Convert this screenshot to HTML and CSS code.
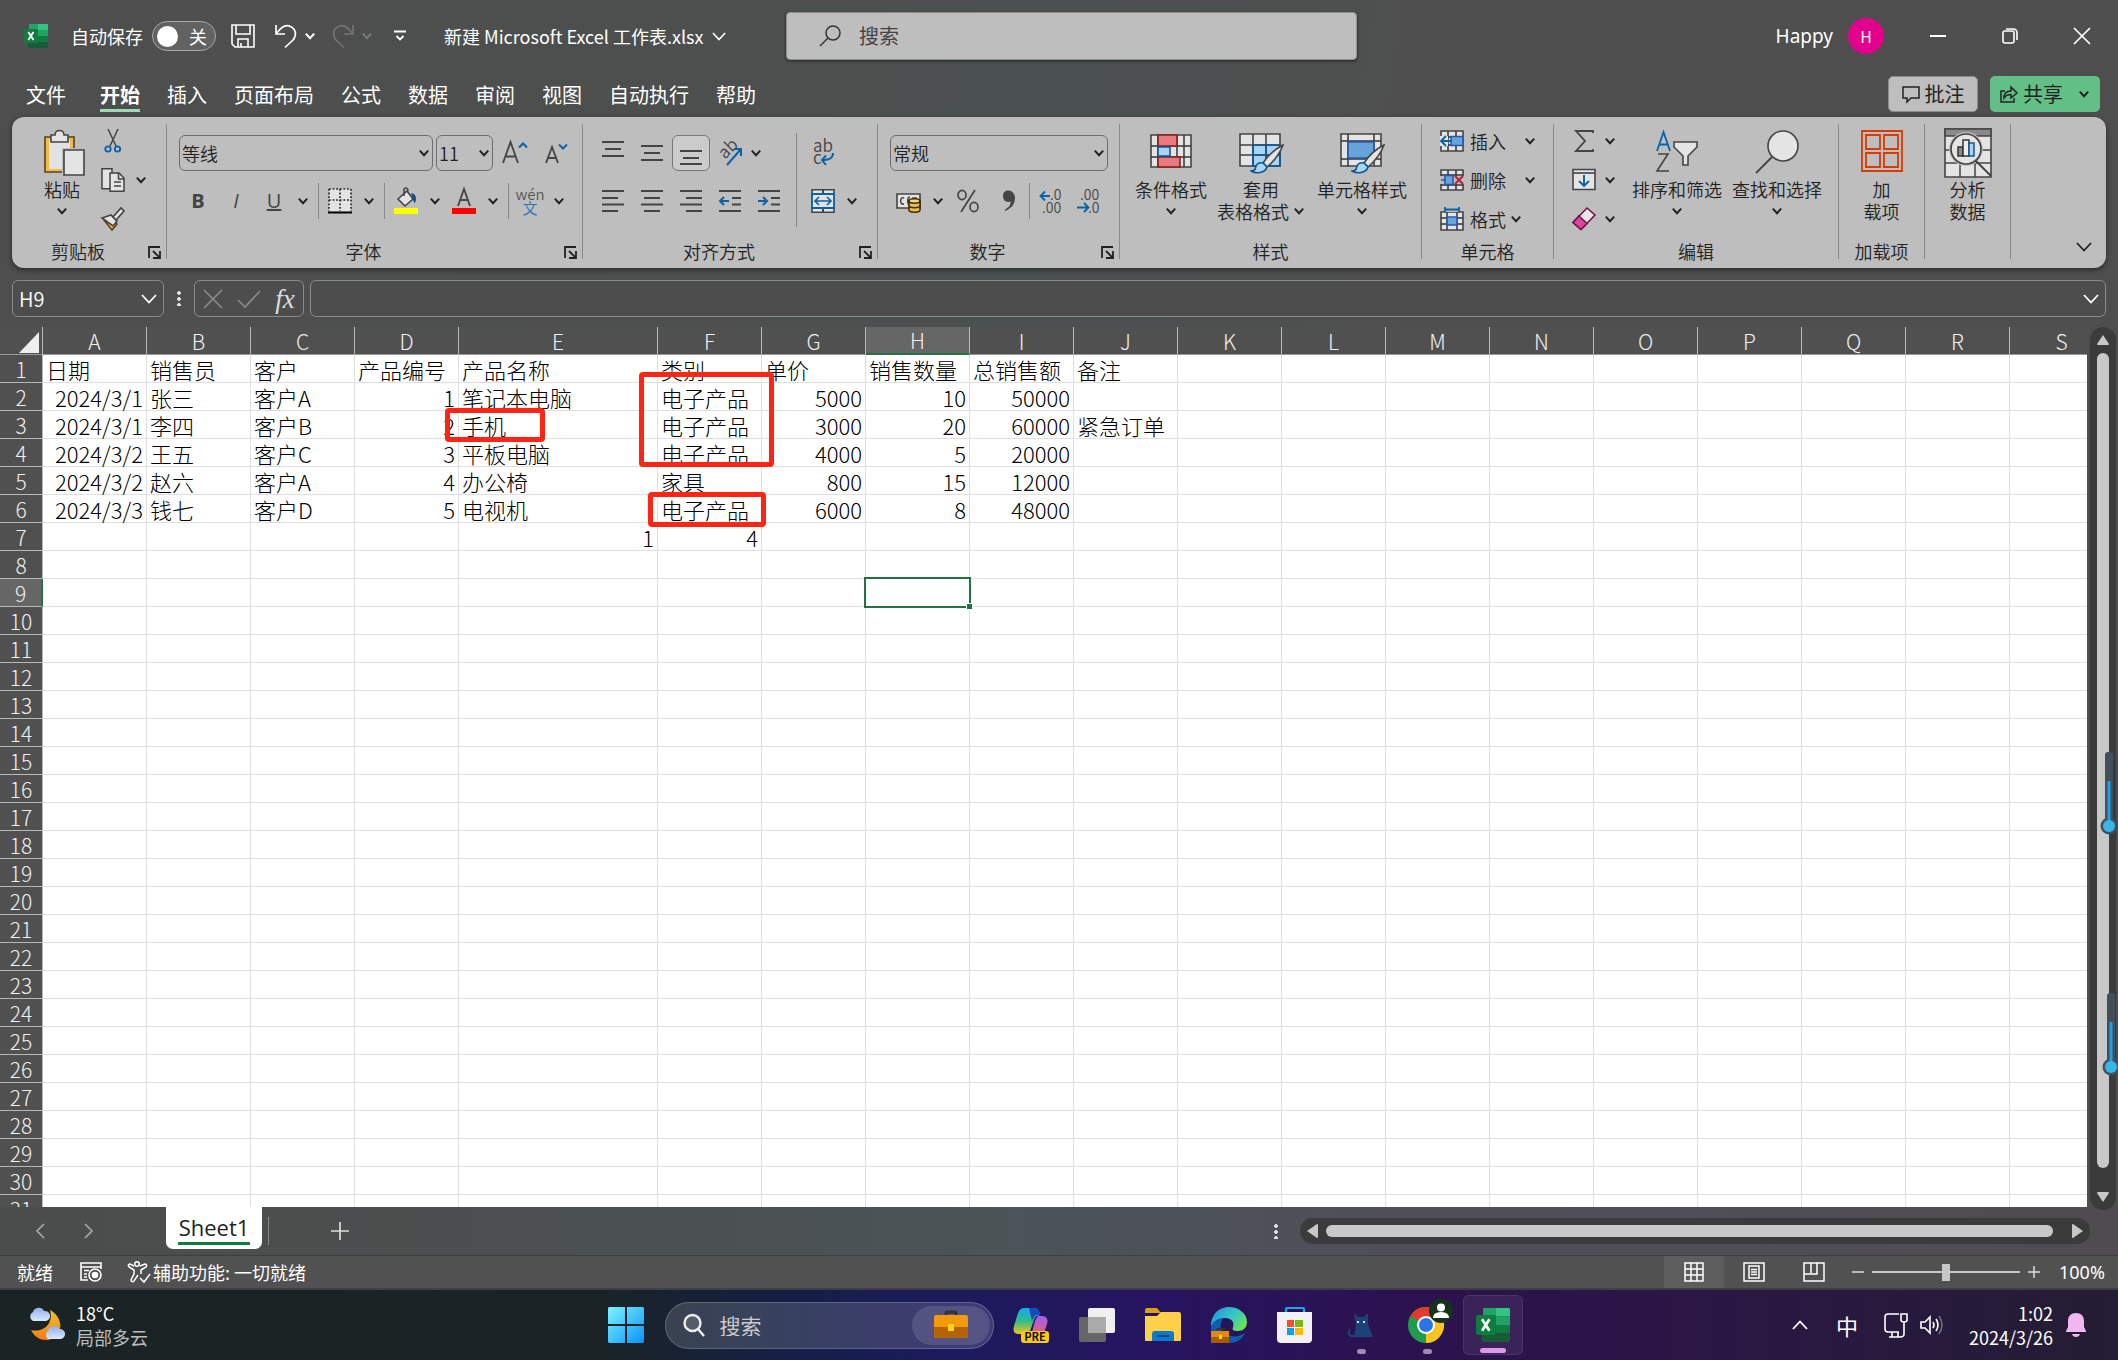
FILE: index.html
```html
<!DOCTYPE html>
<html lang="zh-CN">
<head>
<meta charset="utf-8">
<title>新建 Microsoft Excel 工作表.xlsx</title>
<link rel="stylesheet" href="styles.css">
</head>
<body>
<svg class="sprite" aria-hidden="true">
  <symbol id="chev" viewBox="0 0 10 10"><path d="M1.500 3 5 6.800 8.500 3" fill="none" stroke="currentColor" stroke-width="1.700"/></symbol>
  <symbol id="chev-lg" viewBox="0 0 16 10"><path d="M1 1l7 7.500 7-7.500" fill="none" stroke="currentColor" stroke-width="1.800"/></symbol>
  <symbol id="launch" viewBox="0 0 13 13"><path d="M1 12V1h11M5 5l6 6M12 5v7H5" fill="none" stroke="#222" stroke-width="1.800"/></symbol>
  <symbol id="excel" viewBox="0 0 24 24">
    <path d="M5 0h9v6H5z" fill="#21a366"/><path d="M14 0h9a1 1 0 0 1 1 1v5H14z" fill="#33c481"/>
    <path d="M4 6h10v6H4z" fill="#107c41"/><path d="M14 6h10v6H14z" fill="#21a366"/>
    <path d="M4 12h10v6H4z" fill="#185c37"/><path d="M14 12h10v6H14z" fill="#107c41"/>
    <path d="M4 18h20v5a1 1 0 0 1-1 1H5a1 1 0 0 1-1-1z" fill="#185c37"/>
    <rect y="5" width="14" height="14" rx="1.500" fill="#107c41"/>
    <path d="M4.300 8l5.200 8M9.500 8l-5.200 8" stroke="#fff" stroke-width="1.900"/>
  </symbol>
  <symbol id="brush" viewBox="0 0 34 30">
    <path d="M33 1C25 5 17 13 13 19l4 4C23 18 30 9 33 1z" fill="#e4e4e4" stroke="#444" stroke-width="1.600"/>
    <path d="M13 19c-4-1-7 1-7.500 5-.4 2-2.500 3-4.500 3 5 3 14 2.500 16-4z" fill="#a8d4f5" stroke="#10568f" stroke-width="1.600"/>
  </symbol>
</svg>

<header class="titlebar">
  <div class="title-left">
    <svg class="i24" viewBox="0 0 24 24"><use href="#excel"/></svg>
    <label class="autosave">自动保存
      <span class="switch"><input type="checkbox" role="switch"><span class="switch-text">关</span></span>
    </label>
    <button class="save" aria-label="保存"><svg class="i24" viewBox="0 0 24 24" fill="none" stroke="#fff" stroke-width="1.600"><path d="M1 1h22v22H4l-3-3zM5 1v9h14V1M7 23v-8h10v8M10 19v4"/></svg></button>
    <button class="undo" aria-label="撤消"><svg width="22" height="24" viewBox="0 0 22 24" fill="none" stroke="#fff" stroke-width="1.700"><path d="M1 1v9h9M1.500 9.500C6 3 11 0 15.500 2.500 21 5 22 11 18 16l-8 7.500"/></svg></button>
    <button class="qcaret" aria-label="撤消列表"><svg class="chev"><use href="#chev"/></svg></button>
    <button class="redo" aria-label="恢复"><svg width="22" height="24" viewBox="0 0 22 24" fill="none" stroke="#727372" stroke-width="1.700"><path d="M21 1v9h-9M20.500 9.500C16 3 11 0 6.500 2.500 1 5 0 11 4 16l8 7.500"/></svg></button>
    <button class="qcaret dim" aria-label="恢复列表"><svg class="chev"><use href="#chev"/></svg></button>
    <button class="qat" aria-label="自定义快速访问工具栏"><svg width="14" height="12" viewBox="0 0 14 12" fill="none" stroke="#fff" stroke-width="1.800"><path d="M1 1.500h12M3.500 6 7 9.500 10.500 6"/></svg></button>
    <button class="doc-name">新建 Microsoft Excel 工作表.xlsx <svg width="14" height="9"><use href="#chev-lg"/></svg></button>
  </div>
  <label class="search">
    <svg width="22" height="22" viewBox="0 0 22 22" fill="none" stroke="#333" stroke-width="1.500"><circle cx="14" cy="8" r="7"/><path d="M9 13l-8 8"/></svg>
    <input type="text" placeholder="搜索" aria-label="搜索">
  </label>
  <div class="title-right">
    <span class="user">Happy</span><span class="avatar">H</span>
    <div class="winbtns">
      <button aria-label="最小化"><svg width="16" height="16"><path d="M0 8h16" stroke="#fff" stroke-width="2"/></svg></button>
      <button aria-label="还原"><svg width="16" height="16" viewBox="0 0 16 16" fill="none" stroke="#fff" stroke-width="1.600"><rect x="1" y="3" width="11" height="12" rx="2"/><path d="M4 1h7q4 0 4 4v7"/></svg></button>
      <button aria-label="关闭"><svg width="16" height="16" stroke="#fff" stroke-width="1.700"><path d="M0 0l16 16M16 0L0 16"/></svg></button>
    </div>
  </div>
</header>

<nav class="tabs">
  <div class="tablist">
    <a href="#" class="file">文件</a><a href="#" class="active">开始</a><a href="#">插入</a><a href="#">页面布局</a><a href="#">公式</a><a href="#">数据</a><a href="#">审阅</a><a href="#">视图</a><a href="#">自动执行</a><a href="#">帮助</a>
  </div>
  <button class="comment"><svg width="18" height="18" viewBox="0 0 18 18" fill="none" stroke="#222" stroke-width="1.500"><path d="M1 2h16v11H9l-4 4v-4H1z"/></svg>批注</button>
  <button class="share"><svg width="18" height="18" viewBox="0 0 18 18" fill="none" stroke="#222" stroke-width="1.500"><path d="M5 6H1v11h13v-4M4 13c0-5 3-7 7-7V2l6 6-6 5V9.500c-3 0-5 .5-7 3.500z"/></svg>共享<svg class="chev"><use href="#chev"/></svg></button>
</nav>

<main class="ribbon">
  <section class="group g-clip">
    <div class="body">
      <button class="big paste"><span class="art"><svg width="42" height="46" viewBox="0 0 42 46">
        <path d="M1 7h29v35H1z" fill="#f0bc52" stroke="#5a4310" stroke-width="1.600"/><path d="M5 10h21v29H5z" fill="#e2e2e2"/>
        <path d="M7 12V5h4c0-6 9-6 9 0h4v7z" fill="#e4e4e4" stroke="#444" stroke-width="1.600"/><path d="M18 18h23v27H18z" fill="#bebebe"/><path d="M20 20h20v25H20z" fill="#e4e4e4" stroke="#444" stroke-width="1.600"/></svg></span>
        <span>粘贴</span><span class="line"><svg class="chev"><use href="#chev"/></svg></span></button>
      <div class="stack clip">
        <button aria-label="剪切"><svg class="i24" viewBox="0 0 24 24" fill="none"><path d="M7 0l8 17M17 0L9 17" stroke="#444" stroke-width="1.500"/><circle cx="7" cy="20" r="2.700" stroke="#0b62a8" stroke-width="1.800"/><circle cx="16.500" cy="20" r="2.700" stroke="#0b62a8" stroke-width="1.800"/></svg></button>
        <button aria-label="复制"><svg class="i24" viewBox="0 0 24 24" fill="#e4e4e4" stroke="#444" stroke-width="1.500"><path d="M1 0.800h10v20H1z"/><path d="M9 5h9l5 5v13.200H9z"/><path d="M17.500 5v6H23M13 14h7M13 18h7" fill="none"/></svg><svg class="chev"><use href="#chev"/></svg></button>
        <button aria-label="格式刷"><svg class="i24" viewBox="0 0 24 24" stroke-width="1.600"><path d="M3 13l8 10 5-6-8-8z" fill="#f0bc52" stroke="#5a4310"/><path d="M1 11l9-3 6 6-4 5z" fill="#e4e4e4" stroke="#444"/><path d="M12 10l8-9 3 3-8 9z" fill="#e4e4e4" stroke="#444"/></svg></button>
      </div>
    </div>
    <footer class="with-launch"><span>剪贴板</span><button aria-label="剪贴板设置"><svg class="lau"><use href="#launch"/></svg></button></footer>
  </section>

  <section class="group g-font">
    <div class="body rows">
      <div class="row combos">
        <label class="combo font-name"><select aria-label="字体"><option>等线</option></select><svg class="chev"><use href="#chev"/></svg></label>
        <label class="combo font-size"><select aria-label="字号"><option>11</option></select><svg class="chev"><use href="#chev"/></svg></label>
        <button class="ib" aria-label="增大字号"><svg width="26" height="24" viewBox="0 0 26 24" fill="none" stroke="#444" stroke-width="1.800"><path d="M1 22 8.500 1 16 22M4 15.500h9"/><path d="M17 6.500l4-4 4 4" stroke="#0b62a8" stroke-width="2"/></svg></button>
        <button class="ib" aria-label="减小字号"><svg width="24" height="24" viewBox="0 0 24 24" fill="none" stroke="#444" stroke-width="1.800"><path d="M2 22 8 6l6 16M4.500 17h7"/><path d="M15 3.500l4 4 4-4" stroke="#0b62a8" stroke-width="2"/></svg></button>
      </div>
      <div class="row">
        <button class="ib fmt"><b>B</b></button><button class="ib fmt"><i>I</i></button><button class="ib fmt"><u>U</u></button><button class="car" aria-label="下划线"><svg class="chev"><use href="#chev"/></svg></button>
        <span class="sep"></span>
        <button class="ib" aria-label="边框"><svg width="24" height="26" viewBox="0 0 24 26"><path d="M1 1h22v22H1z" fill="#e4e4e4"/><path d="M1 1h22M1 12h22M1 1v22M12 1v22M23 1v22" stroke="#222" stroke-width="1.600" stroke-dasharray="1.800 1.800"/><path d="M0 24.500h24" stroke="#000" stroke-width="2"/></svg></button><button class="car" aria-label="边框列表"><svg class="chev"><use href="#chev"/></svg></button>
        <span class="sep"></span>
        <button class="ib" aria-label="填充颜色"><svg width="24" height="28" viewBox="0 0 24 28"><path d="M4 12 13 4l6 8-8 7z" fill="#e4e4e4" stroke="#444" stroke-width="1.600"/><path d="M10 9V2c2-2 4-1 4 2" fill="none" stroke="#444" stroke-width="1.500"/><path d="M17 6c5 1 6 5 4 10-2-1-2-5-4-10z" fill="#0b4f86"/><path d="M0 21h24v6H0z" fill="#ff0"/></svg></button><button class="car" aria-label="填充列表"><svg class="chev"><use href="#chev"/></svg></button>
        <button class="ib" aria-label="字体颜色"><svg width="24" height="28" viewBox="0 0 24 28"><path d="M6 19 12 2l6 17M8.500 13h7" fill="none" stroke="#444" stroke-width="1.800"/><path d="M0 21h24v6H0z" fill="#f00"/></svg></button><button class="car" aria-label="颜色列表"><svg class="chev"><use href="#chev"/></svg></button>
        <span class="sep"></span>
        <button class="ib wen"><span>wén</span><span class="blue">文</span></button><button class="car" aria-label="拼音列表"><svg class="chev"><use href="#chev"/></svg></button>
      </div>
    </div>
    <footer class="with-launch"><span>字体</span><button aria-label="字体设置"><svg class="lau"><use href="#launch"/></svg></button></footer>
  </section>

  <section class="group g-align">
    <div class="body">
      <div class="rows">
        <div class="row gap1">
          <button class="ib" aria-label="顶端对齐"><svg class="i24 ln" viewBox="0 0 24 24"><path d="M1 1h22M4 8h16M1 15h22"/></svg></button>
          <button class="ib" aria-label="垂直居中"><svg class="i24 ln" viewBox="0 0 24 24"><path d="M1 5h22M4 12h16M1 19h22"/></svg></button>
          <button class="ib pressed" aria-label="底端对齐"><svg class="i24 ln" viewBox="0 0 24 24"><path d="M1 10h22M4 17h16M1 23h22"/></svg></button>
          <button class="ib" aria-label="方向"><svg width="26" height="26" viewBox="0 0 26 26"><text x="4" y="18" transform="rotate(-45 8 14)" font-size="17" fill="#444" class="svgtxt">ab</text><path d="M10 25 24 9M17 9h7v7" fill="none" stroke="#0b62a8" stroke-width="2"/></svg></button>
          <button class="car tight" aria-label="方向列表"><svg class="chev"><use href="#chev"/></svg></button>
        </div>
        <div class="row gap1">
          <button class="ib" aria-label="左对齐"><svg class="i24 ln" viewBox="0 0 24 24"><path d="M1 2h22M1 9h16M1 15.500h22M1 22h16"/></svg></button>
          <button class="ib" aria-label="居中"><svg class="i24 ln" viewBox="0 0 24 24"><path d="M1 2h22M4 9h16M1 15.500h22M4 22h16"/></svg></button>
          <button class="ib" aria-label="右对齐"><svg class="i24 ln" viewBox="0 0 24 24"><path d="M1 2h22M7 9h16M1 15.500h22M7 22h16"/></svg></button>
          <button class="ib" aria-label="减少缩进"><svg class="i24 ln" viewBox="0 0 24 24"><path d="M1 2h22M14 9h9M14 15.500h9M1 22h22"/><path d="M11 12H2M6 8l-4 4 4 4" stroke="#0b62a8"/></svg></button>
          <button class="ib" aria-label="增加缩进"><svg class="i24 ln" viewBox="0 0 24 24"><path d="M1 2h22M14 9h9M14 15.500h9M1 22h22"/><path d="M1 12h9M6 8l4 4-4 4" stroke="#0b62a8"/></svg></button>
        </div>
      </div>
      <span class="sep tall"></span>
      <div class="rows wrapcol">
        <div class="row"><button class="ib" aria-label="自动换行"><svg width="24" height="28" viewBox="0 0 24 28"><text x="2" y="13" font-size="17" fill="#444" class="svgtxt">ab</text><text x="2" y="25" font-size="17" fill="#444" class="svgtxt">c</text><path d="M22 14c0 5-3 7-11 7M15 16.500 11 21l4 5" fill="none" stroke="#0b62a8" stroke-width="2"/></svg></button></div>
        <div class="row"><button class="ib" aria-label="合并后居中"><svg class="i24" viewBox="0 0 24 24"><path d="M1 0.800h22v22.400H1z" fill="#e4e4e4" stroke="#444" stroke-width="1.600"/><path d="M12 1v22" stroke="#222" stroke-width="1.600"/><path d="M1 5h22v14H1z" fill="#e4e4e4" stroke="#0b62a8" stroke-width="1.800"/><path d="M4 12h16M8 8l-4 4 4 4M16 8l4 4-4 4" fill="none" stroke="#0b62a8" stroke-width="1.700"/></svg></button><button class="car" aria-label="合并列表"><svg class="chev"><use href="#chev"/></svg></button></div>
      </div>
    </div>
    <footer class="with-launch"><span>对齐方式</span><button aria-label="对齐设置"><svg class="lau"><use href="#launch"/></svg></button></footer>
  </section>

  <section class="group g-num">
    <div class="body rows">
      <div class="row"><label class="combo num-format"><select aria-label="数字格式"><option>常规</option></select><svg class="chev"><use href="#chev"/></svg></label></div>
      <div class="row">
        <button class="ib" aria-label="会计数字格式"><svg width="26" height="24" viewBox="0 0 26 24" fill="none" stroke="#444" stroke-width="1.600"><path d="M1 5h23v14H1z" fill="#e4e4e4"/><path d="M8 9c-4-2-5 7 0 6M14 8c-3 0-3 8 0 8M17 13V9h3v3"/><path d="M13 12v9c0 3 11 3 11 0v-9z" fill="#f0bc52" stroke="#3f2f08"/><ellipse cx="18.500" cy="12" rx="5.500" ry="2.200" fill="#f5d48c" stroke="#3f2f08"/><path d="M13 16.500c0 3 11 3 11 0" stroke="#3f2f08"/></svg></button><button class="car" aria-label="货币列表"><svg class="chev"><use href="#chev"/></svg></button>
        <button class="ib" aria-label="百分比样式"><svg class="i24" viewBox="0 0 24 24" fill="none" stroke="#444" stroke-width="1.700"><ellipse cx="7" cy="6" rx="4" ry="4.700"/><ellipse cx="19" cy="18" rx="4" ry="4.700"/><path d="M20 1 6 23"/></svg></button>
        <button class="ib" aria-label="千位分隔样式"><svg class="i24" viewBox="0 0 24 24"><path d="M10 7c0-8 12-7 12 2 0 7-5 11-10 13v-1.500c4-2 6-5 5.500-8C13 14 10 11 10 7z" fill="#444"/></svg></button>
        <span class="sep"></span>
        <button class="ib dec" aria-label="增加小数位数"><svg width="24" height="26" viewBox="0 0 24 26"><text x="11" y="12" font-size="14" fill="#444" class="svgtxt">.0</text><text x="3" y="25" font-size="14" fill="#444" class="svgtxt">.00</text><path d="M11 8H2M6 3.500 1.500 8 6 12.500" fill="none" stroke="#0b62a8" stroke-width="1.800"/></svg></button>
        <button class="ib dec" aria-label="减少小数位数"><svg width="24" height="26" viewBox="0 0 24 26"><text x="3" y="12" font-size="14" fill="#444" class="svgtxt">.00</text><text x="11" y="25" font-size="14" fill="#444" class="svgtxt">.0</text><path d="M0 19.500h11M7 15l4.500 4.500L7 24" fill="none" stroke="#0b62a8" stroke-width="1.800"/></svg></button>
      </div>
    </div>
    <footer class="with-launch"><span>数字</span><button aria-label="数字设置"><svg class="lau"><use href="#launch"/></svg></button></footer>
  </section>

  <section class="group g-style">
    <div class="body">
      <button class="big w88"><span class="art"><svg width="42" height="42" viewBox="0 0 42 42"><path d="M1 5h40v32H1z" fill="#e4e4e4" stroke="#444" stroke-width="1.600"/><path d="M1 16h40M1 27h40M8 5v32M34 5v32M27 5v32" stroke="#333" stroke-width="1.500"/><path d="M8 5h19v11H8zM8 27h22v10H8z" fill="#e67a7e" stroke="#8c1c22" stroke-width="1.600"/><path d="M8 17h12v9H8z" fill="#a8d4f5" stroke="#10568f" stroke-width="1.600"/></svg></span>
        <span>条件格式</span><span class="line"><svg class="chev"><use href="#chev"/></svg></span></button>
      <button class="big w90"><span class="art"><svg width="45" height="44" viewBox="0 0 45 44"><path d="M1 4h40v32H1z" fill="#e4e4e4"/><path d="M14 15h27v21H14z" fill="#a8d4f5"/><path d="M1 15h40M1 25h40M14 4v32M27 4v32M1 4h40v32H1z" fill="none" stroke="#444" stroke-width="1.600"/><path d="M14 15h27v21H14zM27 15v21M14 25h27" fill="none" stroke="#10568f" stroke-width="1.600"/><use href="#brush" x="11" y="14" width="34" height="30"/></svg></span>
        <span>套用</span><span class="line">表格格式 <svg class="chev"><use href="#chev"/></svg></span></button>
      <button class="big w110"><span class="art"><svg width="45" height="44" viewBox="0 0 45 44"><path d="M1 4h40v32H1z" fill="#e4e4e4" stroke="#444" stroke-width="1.600"/><path d="M1 11h40M1 29h40M8 4v32M34 4v32" stroke="#333" stroke-width="1.500"/><path d="M8 12h26v16H8z" fill="#65a5da" stroke="#2a55b0" stroke-width="1.600"/><use href="#brush" x="11" y="14" width="34" height="30"/></svg></span>
        <span>单元格样式</span><span class="line"><svg class="chev"><use href="#chev"/></svg></span></button>
    </div>
    <footer><span>样式</span></footer>
  </section>

  <section class="group g-cells">
    <div class="body"><div class="stack cells">
      <button><svg class="i24" viewBox="0 0 24 24"><path d="M1 2h22v20H1z" fill="#e4e4e4" stroke="#444" stroke-width="1.600"/><path d="M8 2v20M16 2v20M1 8h22M1 16h22" stroke="#333" stroke-width="1.500"/><path d="M11 7.500h12v9H11z" fill="#65a5da" stroke="#2a55b0" stroke-width="1.500"/><path d="M0 7h8v10H0z" fill="#e4e4e4"/><path d="M12 12H1M6 7l-5 5 5 5" fill="none" stroke="#0b62a8" stroke-width="1.900"/></svg><span>插入</span><svg class="chev end"><use href="#chev"/></svg></button>
      <button><svg class="i24" viewBox="0 0 24 24"><path d="M1 2h22v20H1z" fill="#e4e4e4" stroke="#444" stroke-width="1.600"/><path d="M8 2v20M16 2v20M1 7h22M1 17h22" stroke="#333" stroke-width="1.500"/><path d="M0 8h24v8H0z" fill="#bebebe"/><path d="M5 7.500h8v9H5zM1 12h4" fill="#65a5da" stroke="#2a55b0" stroke-width="1.600"/><path d="M15 8l8 8M23 8l-8 8" stroke="#b3242c" stroke-width="2"/></svg><span>删除</span><svg class="chev end"><use href="#chev"/></svg></button>
      <button><svg class="i24" viewBox="0 0 24 24"><path d="M1 5h22v18H1z" fill="#e4e4e4" stroke="#444" stroke-width="1.600"/><path d="M7 5v18M17 5v18M1 11h22M1 17h22" stroke="#333" stroke-width="1.500"/><path d="M4 0h16v5H4z" fill="#bebebe"/><path d="M7 10h10v8H7z" fill="#65a5da" stroke="#2a55b0" stroke-width="1.600"/><path d="M5 0v5M19 0v5M5 2.500h14" stroke="#0b62a8" stroke-width="1.800"/></svg><span>格式</span><svg class="chev"><use href="#chev"/></svg></button>
    </div></div>
    <footer><span>单元格</span></footer>
  </section>

  <section class="group g-edit">
    <div class="body">
      <div class="stack edit">
        <button aria-label="自动求和"><svg class="i24" viewBox="0 0 24 24"><path d="M21 4V2H4l9 10-9 10h17v-2" fill="none" stroke="#444" stroke-width="1.800"/></svg><svg class="chev"><use href="#chev"/></svg></button>
        <button aria-label="填充"><svg class="i24" viewBox="0 0 24 24"><path d="M1 1.500h22v20H1z" fill="#e4e4e4" stroke="#444" stroke-width="1.600"/><path d="M1 5h22" stroke="#444" stroke-width="1.600"/><path d="M12 7v11M7 13l5 5 5-5" fill="none" stroke="#0b62a8" stroke-width="1.900"/></svg><svg class="chev"><use href="#chev"/></svg></button>
        <button aria-label="清除"><svg class="i24" viewBox="0 0 24 24" stroke="#7a0f4e" stroke-width="1.600"><path d="M15 1l8 7L9 22.500 1 15.500z" fill="#e8e8e8"/><path d="M7 9l8 7.500-6 6-8-7z" fill="#d9489c"/></svg><svg class="chev"><use href="#chev"/></svg></button>
      </div>
      <button class="big w100"><span class="art"><svg width="42" height="44" viewBox="0 0 42 44" fill="none"><path d="M1 21 7.500 2 14 21M3.500 14.500h8" stroke="#0b62a8" stroke-width="1.800"/><path d="M2 24h10L1 41h12" stroke="#444" stroke-width="1.600"/><path d="M18 12h23v5l-9 9v9h-5v-9l-9-9z" fill="#e4e4e4" stroke="#444" stroke-width="1.600"/></svg></span>
        <span>排序和筛选</span><span class="line"><svg class="chev"><use href="#chev"/></svg></span></button>
      <button class="big w100"><span class="art"><svg width="44" height="44" viewBox="0 0 44 44"><circle cx="28" cy="16" r="15" fill="#e4e4e4" stroke="#444" stroke-width="1.600"/><path d="M17 27 1 43" stroke="#444" stroke-width="1.800"/></svg></span>
        <span>查找和选择</span><span class="line"><svg class="chev"><use href="#chev"/></svg></span></button>
    </div>
    <footer><span>编辑</span></footer>
  </section>

  <section class="group g-add">
    <div class="body"><button class="big w85"><span class="art"><svg width="42" height="42" viewBox="0 0 42 42" fill="none" stroke="#d83b01" stroke-width="1.800"><path d="M1 1h40v40H1zM5 5h14v14H5zM23 5h14v14H23zM5 23h14v14H5zM23 23h14v14H23z"/></svg></span><span>加</span><span class="line">载项</span></button></div>
    <footer><span>加载项</span></footer>
  </section>

  <section class="group g-data">
    <div class="body"><button class="big w85 analyze"><span class="art"><svg width="48" height="50" viewBox="0 0 48 50"><path d="M1 1h46v48H1z" fill="#e4e4e4" stroke="#444" stroke-width="1.600"/><path d="M1 1h46v7H1z" fill="#8a8a8a" stroke="#444" stroke-width="1.500"/><path d="M1 22h46M1 35h46M16 36v13M31 36v13M11 8v14" stroke="#444" stroke-width="1.500"/><circle cx="22" cy="21" r="17" fill="#bebebe"/><circle cx="22" cy="21" r="15" fill="#e4e4e4" stroke="#444" stroke-width="1.700"/><path d="M32 33l15 15" stroke="#444" stroke-width="2"/><path d="M14 19h5v9h-5z" fill="#8a8a8a" stroke="#333" stroke-width="1.500"/><path d="M19 12h6v16h-6z" fill="#eee" stroke="#333" stroke-width="1.500"/><path d="M25 15h5v13h-5z" fill="#a8d4f5" stroke="#10568f" stroke-width="1.500"/></svg></span><span>分析</span><span class="line">数据</span></button></div>
  </section>
  <button class="collapse" aria-label="折叠功能区"><svg width="16" height="10"><use href="#chev-lg"/></svg></button>
</main>

<div class="formula-bar">
  <label class="namebox"><input type="text" value="H9" aria-label="名称框"><svg width="16" height="10"><use href="#chev-lg"/></svg></label>
  <span class="dots"></span>
  <div class="fxbox">
    <button aria-label="取消"><svg width="18" height="18" stroke="#8c8c8c" stroke-width="1.600"><path d="M0 0l18 18M18 0L0 18"/></svg></button>
    <button aria-label="输入"><svg width="24" height="18" viewBox="0 0 24 18" fill="none" stroke="#8c8c8c" stroke-width="1.600"><path d="M1 10l7 7L23 1"/></svg></button>
    <button class="fx">fx</button>
  </div>
  <label class="formula"><input type="text" aria-label="编辑栏"><svg width="16" height="10"><use href="#chev-lg"/></svg></label>
</div>

<div class="sheet-area">
  <div class="sheet">
    <table id="grid"></table>
    <span class="mark m1"></span><span class="mark m2"></span><span class="mark m3"></span>
  </div>
  <div class="vscroll">
    <svg width="14" height="10"><path d="M7 0l6 9q0 1-1 1H2q-1 0-1-1z" fill="#c8c8c8"/></svg>
    <span class="vthumb"></span>
    <svg width="14" height="10"><path d="M7 10l6-9q0-1-1-1H2Q1 0 1 1z" fill="#c8c8c8"/></svg>
    <svg class="gauge g1" width="16" height="84" viewBox="0 0 16 84"><rect x="4" y="1" width="8" height="70" rx="3" fill="#434f5b"/><circle cx="8" cy="75" r="8.500" fill="#434f5b"/><path d="M8 30v45" stroke="#18a4ec" stroke-width="3"/><circle cx="8" cy="75" r="6" fill="#38b6e8"/></svg>
    <svg class="gauge g2" width="16" height="84" viewBox="0 0 16 84"><rect x="4" y="1" width="8" height="70" rx="3" fill="#434f5b"/><circle cx="8" cy="75" r="8.500" fill="#434f5b"/><path d="M8 30v45" stroke="#18a4ec" stroke-width="3"/><circle cx="8" cy="75" r="6" fill="#38b6e8"/></svg>
  </div>
</div>

<div class="sheetbar">
  <button class="nav" aria-label="上一个"><svg width="10" height="16" viewBox="0 0 10 16" fill="none" stroke="#a8a8a8" stroke-width="1.700"><path d="M9 1 2 8l7 7"/></svg></button>
  <button class="nav" aria-label="下一个"><svg width="10" height="16" viewBox="0 0 10 16" fill="none" stroke="#a8a8a8" stroke-width="1.700"><path d="M1 1l7 7-7 7"/></svg></button>
  <button class="sheettab"><span>Sheet1</span></button>
  <span class="tabsep"></span>
  <button class="add" aria-label="新工作表"><svg width="18" height="18" stroke="#ddd" stroke-width="1.700"><path d="M9 0v18M0 9h18"/></svg></button>
  <span class="dots push"></span>
  <div class="hscroll">
    <svg width="11" height="14"><path d="M11 1v12q0 1-1 1L0 7l10-7q1 0 1 1z" fill="#c8c8c8"/></svg>
    <span class="hthumb"></span>
    <svg width="11" height="14"><path d="M0 1v12q0 1 1 1l10-7L1 0Q0 0 0 1z" fill="#c8c8c8"/></svg>
  </div>
</div>

<div class="statusbar">
  <span>就绪</span>
  <svg class="rec" width="22" height="20" viewBox="0 0 22 20" fill="none" stroke="#fff" stroke-width="1.600"><path d="M8 18H1V1h20v6M1 5h20M4 8.500h5M4 12h3M4 15h3"/><circle cx="15" cy="13" r="6"/><circle cx="15" cy="13" r="2.500" fill="#fff"/></svg>
  <svg class="acc" width="24" height="22" viewBox="0 0 24 22" fill="none" stroke="#fff" stroke-width="1.500"><circle cx="10" cy="3" r="2.300"/><path d="M7 5 3 3C1 3 1 5 2 6l5 3v4l-3 6c0 2 2 2 3 1l4-6M13 5l5-2c2 0 2 2 1 3l-5 3v4M13 17l4 4 6-8"/></svg>
  <span class="acc-text">辅助功能: 一切就绪</span>
  <div class="views">
    <button class="on" aria-label="普通"><svg width="20" height="20" viewBox="0 0 20 20" fill="none" stroke="#fff" stroke-width="1.500"><path d="M1 1h18v18H1zM7 1v18M13 1v18M1 7h18M1 13h18"/></svg></button>
    <button aria-label="页面布局"><svg width="22" height="20" viewBox="0 0 22 20" fill="none" stroke="#fff" stroke-width="1.500"><path d="M1 1h20v18H1zM6 4h10v12H6zM8 7.500h6M8 10h6M8 12.500h6"/></svg></button>
    <button aria-label="分页预览"><svg width="22" height="20" viewBox="0 0 22 20" fill="none" stroke="#fff" stroke-width="1.500"><path d="M1 1h20v18H1zM8 1v10M14 1v10M1 12h13V1"/></svg></button>
  </div>
  <button class="zb" aria-label="缩小"><svg width="12" height="12"><path d="M0 6h12" stroke="#ddd" stroke-width="1.500"/></svg></button>
  <input class="zoom" type="range" min="0" max="100" value="50" aria-label="缩放">
  <button class="zb" aria-label="放大"><svg width="12" height="12"><path d="M0 6h12M6 0v12" stroke="#ddd" stroke-width="1.500"/></svg></button>
  <span class="pct">100%</span>
</div>

<footer class="taskbar">
  <button class="weather">
    <svg width="38" height="36" viewBox="0 0 38 36"><defs><linearGradient id="mo" x1="0" y1="0" x2="0" y2="1"><stop offset="0" stop-color="#f2c230"/><stop offset="1" stop-color="#f07c18"/></linearGradient><linearGradient id="cl" x1="0" y1="0" x2="0" y2="1"><stop offset="0" stop-color="#8fb0ee"/><stop offset="1" stop-color="#dce8fb"/></linearGradient></defs><path d="M22 3c8 4 13 14 9 22-5 11-22 11-28-2 12 3 23-6 19-20z" fill="url(#mo)"/><path d="M5 14a5 5 0 0 1 0-9 6 6 0 0 1 11-1 5 5 0 0 1 2 10z" fill="url(#cl)"/><path d="M20 32a5 5 0 0 1 0-8 6 6 0 0 1 11-2 5 5 0 0 1 2 10z" fill="url(#cl)"/></svg>
    <span class="wt"><span>18°C</span><span class="muted">局部多云</span></span>
  </button>
  <div class="apps">
    <button class="app" aria-label="开始菜单"><svg width="36" height="36" viewBox="0 0 36 36"><defs><linearGradient id="wn" x1="0" y1="0" x2="1" y2="1"><stop offset="0" stop-color="#7df3ff"/><stop offset="1" stop-color="#0a92fb"/></linearGradient></defs><path d="M1 0h16v17H0V1zM19 0h16l1 1v16H19zM0 19h17v17H1l-1-1zM19 19h17v16l-1 1H19z" fill="url(#wn)"/></svg></button>
    <label class="tsearch"><svg width="22" height="24" viewBox="0 0 22 24" fill="#ffffff22" stroke="#eee" stroke-width="2.400"><circle cx="9.500" cy="10" r="8"/><path d="M15 16l6 7"/></svg><input type="text" placeholder="搜索" aria-label="任务栏搜索">
      <span class="brief"><svg width="34" height="28" viewBox="0 0 34 28"><path d="M12 5V2q0-1 1-1h8q1 0 1 1v3" fill="none" stroke="#333" stroke-width="3"/><rect y="4" width="34" height="23" rx="2" fill="#f09a0c"/><path d="M0 16h34v9q0 2-2 2H2q-2 0-2-2z" fill="#b56405"/><path d="M14 13h6v7h-6z" fill="#ffd21f"/></svg></span></label>
    <button class="app" aria-label="Copilot"><svg width="36" height="36" viewBox="0 0 36 36"><defs><linearGradient id="ca" x1="0" y1="0" x2="0" y2="1"><stop offset="0" stop-color="#18a5f2"/><stop offset=".5" stop-color="#2fbf8a"/><stop offset="1" stop-color="#f5c318"/></linearGradient><linearGradient id="cb" x1="0" y1="0" x2="0" y2="1"><stop offset="0" stop-color="#a35cf0"/><stop offset="1" stop-color="#f2606a"/></linearGradient></defs><path d="M11 1h10q5 0 6 7l-5 2-5 14q-2 3-6 3H6q-7 0-5-8l4-13q2-5 6-5z" fill="url(#ca)"/><path d="M16 1h5q5 0 6 7h-3q-3 0-5 6z" fill="#1549c0"/><path d="M26 9h3q7 0 5 8l-3 9q-2 5-6 5H14q3 0 5-6l3-11q2-5 4-5z" fill="url(#cb)"/><rect x="8" y="24" width="28" height="12" rx="3" fill="#ffc90e"/><text x="22" y="34" font-size="11" font-weight="700" text-anchor="middle" fill="#111" class="svgtxt">PRE</text></svg></button>
    <button class="app" aria-label="任务视图"><svg width="38" height="34" viewBox="0 0 38 34"><rect x="1" y="9" width="27" height="25" rx="2" fill="#666"/><rect x="10" y="0" width="27" height="25" rx="2" fill="#f0f0f0"/><path d="M10 9h18v16H10z" fill="#aaa"/></svg></button>
    <button class="app" aria-label="文件资源管理器"><svg width="36" height="34" viewBox="0 0 36 34"><path d="M0 2q0-2 2-2h10l4 5H0z" fill="#e0a008"/><path d="M0 8h12l4-4h18q2 0 2 2v26q0 1-1 1H1q-1 0-1-1z" fill="#ffd04a"/><path d="M7 33V26q0-3 3-3h16q3 0 3 3v7z" fill="#0f78c8"/><path d="M12 28h12" stroke="#0a4f90" stroke-width="2"/></svg></button>
    <button class="app" aria-label="Edge"><svg width="36" height="36" viewBox="0 0 36 36"><defs><linearGradient id="ed" x1="0" y1="0" x2="1" y2=".6"><stop offset="0" stop-color="#1a8fd8"/><stop offset=".6" stop-color="#37c6c8"/><stop offset="1" stop-color="#6ae05a"/></linearGradient></defs><path d="M0 20C0 6 9 0 18 0s18 6 18 15c0 6-4 9-9 9-5 0-6-1-5-4 2-6-3-9-8-9C7 11 2 15 0 20z" fill="url(#ed)"/><path d="M0 20c2-6 7-9 12-8-4 5-4 16 8 17 5 1 10 0 14-3-3 7-9 10-16 10C8 36 0 29 0 20z" fill="#0f5cae"/><path d="M4 23h10v-2h-7z" fill="#333"/><path d="M0 24h18v12H0z" fill="#e08a08"/><path d="M0 30h18v6H0z" fill="#a85a04"/><path d="M8 28h3v4H8z" fill="#ffd21f"/></svg></button>
    <button class="app" aria-label="Microsoft Store"><svg width="36" height="36" viewBox="0 0 36 36"><path d="M9 8V2q0-1 1-1h16q1 0 1 1v6" fill="none" stroke="#18a5f2" stroke-width="2.200"/><path d="M0 5h35v27q0 4-4 4H4q-4 0-4-4z" fill="#f2f2f4"/><path d="M9 5V3M27 5V3" stroke="#18a5f2" stroke-width="2"/><path d="M10 13h7v7h-7z" fill="#f25022"/><path d="M18 13h8v7h-8z" fill="#7fba00"/><path d="M10 21h7v7h-7z" fill="#00a4ef"/><path d="M18 21h8v7h-8z" fill="#ffb900"/></svg></button>
    <button class="app dot" aria-label="Cat"><svg width="26" height="26" viewBox="0 0 26 26"><path d="M6 1l4 4h6l4-4v11l5 13H6l2-12z" fill="#1c4277"/><path d="M8 24H3q-4-2-1-7" fill="none" stroke="#1c4277" stroke-width="2"/><path d="M9 9h2v2H9zM15 9h2v2h-2z" fill="#cfe6ff"/></svg></button>
    <button class="app dot" aria-label="Chrome"><svg class="chrome" width="46" height="44" viewBox="0 0 46 44"><circle cx="18" cy="26" r="18" fill="#1f9d4c"/><path d="M18 26 2.400 17A18 18 0 0 1 33.600 17z" fill="#e33b2e"/><path d="M18 26 33.600 17A18 18 0 0 1 18 44z" fill="#fcc31e"/><path d="M18 17h16v2l-9 11z" fill="#fcc31e"/><path d="M2.400 17 9 13h22l2.600 4-15.600 1z" fill="#e33b2e"/><circle cx="18" cy="26" r="9" fill="#fff"/><circle cx="18" cy="26" r="7" fill="#2a74e8"/><circle cx="33" cy="12" r="12" fill="#14351c"/><circle cx="33" cy="8.500" r="4" fill="#fff"/><path d="M25 19q0-6 8-6t8 6z" fill="#fff"/></svg></button>
    <button class="app current" aria-label="Excel"><svg width="36" height="34" viewBox="0 0 24 24"><use href="#excel"/></svg></button>
  </div>
  <div class="tray">
    <svg width="16" height="10" viewBox="0 0 16 10" fill="none" stroke="#fff" stroke-width="1.800"><path d="M1 9l7-7.500L15 9"/></svg>
    <span class="ime">中</span>
    <svg class="pc" width="24" height="26" viewBox="0 0 24 26" fill="none" stroke="#fff" stroke-width="1.600"><path d="M15 2H4Q1 2 1 5v12q0 3 3 3h11M5 25h12M8 20v5M14 20v5M17 2h6v6q0 2-3 2t-3-2zM20 10v12q0 3-4 3"/></svg>
    <svg class="snd" width="24" height="20" viewBox="0 0 24 20" fill="none" stroke="#fff" stroke-width="1.600"><path d="M1 7v6h4l5 5V2L5 7zM13 7q2 3 0 6M16 4q4 6 0 12"/><path d="M19 1q6 9 0 18" stroke="#77697f"/></svg>
    <span class="clock"><span>1:02</span><span>2024/3/26</span></span>
    <svg class="bell" width="20" height="24" viewBox="0 0 20 24" fill="#f0b8ee"><path d="M10 0c5 0 8 3 8 8v6l2 4v1H0v-1l2-4V8c0-5 3-8 8-8zM6 21h8q-1 3-4 3t-4-3z"/></svg>
  </div>
</footer>
<script src="grid.js"></script>
</body>
</html>
```
FILE: styles.css
```css
* { box-sizing: border-box; }
html, body { height: 100%; margin: 0; }
body {
  display: flex; flex-direction: column; overflow: hidden;
  font: 18px/22px "Noto Sans CJK SC", "Noto Sans", sans-serif;
  color: #fff;
  background: linear-gradient(100deg, #4e4e4e 0%, #4d4f4e 25%, #4b5050 45%, #4f4f4f 62%, #4e4e4e 100%);
}
button, input, select { font: inherit; color: inherit; margin: 0; padding: 0; border: 0; background: none; outline: 0; }
button { display: flex; align-items: center; justify-content: center; white-space: nowrap; }
a { color: inherit; text-decoration: none; }
svg { display: block; flex: none; overflow: visible; }
.sprite { position: absolute; width: 0; height: 0; overflow: hidden; }
.i24 { width: 24px; height: 24px; }
.chev { width: 12px; height: 12px; }
.lau { width: 13px; height: 13px; }
.ln { fill: none; stroke: #444; stroke-width: 2; }
.svgtxt { font-family: "Noto Sans CJK SC", sans-serif; }

/* title bar */
.titlebar { flex: none; height: 72px; display: grid; grid-template-columns: minmax(0, 786fr) minmax(0, 571fr) minmax(0, 761fr); align-items: center; }
.title-left { display: flex; align-items: center; padding-left: 24px; }
.autosave { display: flex; align-items: center; gap: 9px; margin: 0 15px 0 23px; }
.switch { display: grid; }
.switch > * { grid-area: 1 / 1; }
.switch input { appearance: none; width: 64px; height: 30px; border: 1px solid #a8a8a8; border-radius: 15px; background: #626262; display: flex; align-items: center; padding-left: 4px; }
.switch input::before { content: ""; width: 21px; height: 21px; border-radius: 50%; background: #fff; }
.switch-text { align-self: center; justify-self: end; margin-right: 9px; }
.undo { margin-left: 20px; }
.qcaret { margin-left: 7px; }
.redo { margin-left: 16px; }
.dim { color: #777; }
.qat { margin-left: 20px; }
.doc-name { margin-left: 37px; gap: 9px; }
.search { display: flex; align-items: center; height: 48px; padding-left: 32px; gap: 18px; background: #bebebe; border: 1px solid #8f8f8f; border-radius: 4px; box-shadow: 0 1px 3px #222; color: #333; }
.search input { flex: 1; font-size: 20px; min-width: 0; }
.search input::placeholder { color: #444; opacity: 1; }
.title-right { display: flex; align-items: center; justify-content: flex-end; }
.user { font-size: 19px; font-family: "Noto Sans", sans-serif; margin-right: 15px; }
.avatar { width: 36px; height: 36px; border-radius: 50%; background: #e3008c; font-size: 16px; line-height: 36px; text-align: center; margin-right: 18px; }
.winbtns { display: flex; }
.winbtns button { width: 72px; height: 48px; }

/* tabs */
.tabs { flex: none; height: 45px; display: flex; align-items: flex-start; padding: 4px 18px 0 26px; font-size: 20px; }
.tablist { display: flex; gap: 27px; flex: 1; padding-top: 5px; }
.tablist a { line-height: 28px; border-bottom: 3px solid transparent; }
.tablist .file { margin-right: 7px; }
.tablist .active { font-weight: 700; border-color: #9fd8b6; }
.comment, .share { height: 36px; border-radius: 5px; color: #222; gap: 5px; }
.comment { width: 90px; background: #bebebe; border: 1px solid #8c8c8c; margin-right: 12px; }
.share { width: 110px; background: #62bf86; }
.share .chev { margin-left: 10px; }

/* ribbon */
.ribbon { flex: none; display: flex; height: 151px; margin: 0 12px; padding: 7px 0 9px; background: #bebebe; border-radius: 12px; color: #222; font-weight: 350; box-shadow: 0 2px 5px #2a2a2a; }
.group { flex: none; display: flex; flex-direction: column; border-right: 1px solid #8a8a8a; }
.body { display: flex; flex: 1; min-height: 0; }
.group footer { flex: none; display: flex; align-items: center; justify-content: center; height: 15px; line-height: 15px; position: relative; }
.group .with-launch { padding-right: 22px; }
.group footer button { position: absolute; right: 5px; bottom: 0; }
.big { flex-direction: column; justify-content: flex-start; align-items: center; padding-top: 6px; }
.art { height: 48px; display: flex; align-items: flex-start; }
.line { display: flex; align-items: center; gap: 4px; height: 22px; }
.stack { display: flex; flex-direction: column; gap: 5px; }
.stack button { height: 34px; justify-content: flex-start; }
.rows { display: flex; flex-direction: column; gap: 12px; padding-top: 11px; }
.row { display: flex; flex: none; height: 36px; align-items: center; }
.gap1 { gap: 1px; }
.combos { gap: 3px; }
.ib { width: 38px; height: 36px; flex: none; }
.car { width: 20px; height: 36px; flex: none; }
.tight { width: 12px; }
.sep { flex: none; width: 1px; height: 36px; margin: 0 2px 0 5px; background: #8a8a8a; }
.sep.tall { height: 94px; margin: 9px 7px 0 8px; }
.pressed { border: 1px solid #777; border-radius: 6px; background: #cbcbcb; }
.combo { display: grid; height: 36px; border: 1px solid #6e6e6e; border-radius: 6px; }
.combo > * { grid-area: 1 / 1; }
.combo select { appearance: none; padding-left: 2px; width: 100%; }
.combo .chev { align-self: center; justify-self: end; margin-right: 2px; pointer-events: none; }
.fmt { font: 20px/36px "Open Sans", sans-serif; color: #444; }
.wen { flex-direction: column; font-size: 15px; line-height: 14px; color: #555; }
.blue { color: #2e75b6; }

.g-clip { width: 155px; } .g-clip .body { padding-left: 25px; }
.g-font { width: 416px; } .g-font .body { padding-left: 12px; }
.g-align { width: 295px; } .g-align .body { padding-left: 11px; }
.g-num { width: 242px; } .g-num .body { padding-left: 12px; }
.g-style { width: 302px; } .g-style .body { padding-left: 7px; gap: 1px; }
.g-cells { width: 132px; } .g-cells .body { padding-left: 18px; }
.g-edit { width: 285px; } .g-edit .body { padding-left: 18px; }
.g-add, .g-data { width: 86px; }
.paste { width: 50px; }
.paste .art { padding-left: 6px; }
.analyze { padding-top: 4px; }
.analyze .art { height: 50px; }
.clip { margin-left: 14px; }
.clip button { gap: 10px; }
.cells { width: 96px; }
.cells button { gap: 6px; }
.cells .chev { margin-left: -2px; }
.cells .end { margin-left: auto; }
.edit { margin-right: 11px; }
.edit button { gap: 8px; }
.w85 { width: 85px; } .w88 { width: 88px; } .w90 { width: 90px; } .w100 { width: 100px; } .w110 { width: 110px; }
.font-name { width: 254px; } .font-size { width: 57px; } .num-format { width: 218px; }
.collapse { margin: auto 14px 4px auto; height: 16px; }

/* formula bar */
.formula-bar { flex: none; display: flex; height: 37px; margin: 12px 12px 10px; }
.namebox, .fxbox, .formula { display: flex; align-items: center; border: 1px solid #8a8a8a; border-radius: 6px; background: #4d4d4d; }
.namebox { width: 152px; padding: 0 6px; font-size: 20px; font-weight: 350; }
.namebox input { flex: 1; min-width: 0; }
.dots { width: 4px; height: 16px; margin: 10px 13px 0; background: radial-gradient(circle, #ddd 2px, transparent 2px) 0 0 / 4px 6px; }
.fxbox { width: 110px; }
.fxbox button { flex: 1; }
.fxbox .fx { font: italic 27px/30px "Liberation Serif", serif; color: #ddd; }
.formula { flex: 1; margin-left: 6px; padding-right: 6px; }
.formula input { flex: 1; }

/* sheet */
.sheet-area { flex: 1; min-height: 0; display: flex; }
.sheet { position: relative; flex: 1; min-width: 0; overflow: hidden; background: #fff; }
table { border-collapse: separate; border-spacing: 0; table-layout: fixed; width: 2114px; color: #000; font-size: 22px; line-height: 26px; }
.c-row { width: 43px; }
.c-e { width: 199px; }
th, td { height: 28px; padding: 0 3px; white-space: nowrap; font-weight: 300; }
td { border-right: 1px solid #e0e0e0; border-bottom: 1px solid #e0e0e0; text-align: left; }
td.num { text-align: right; }
th { background: #505050; color: #f0f0f0; font-size: 21px; border-right: 1px solid #b8b8b8; border-bottom: 1px solid #b8b8b8; padding: 0; }
thead th { border-bottom-color: #999; }
thead th.sel { background: #666; border-bottom: 2px solid #217346; }
tbody th.sel { background: #666; border-right: 2px solid #217346; }
.corner::after { content: ""; display: block; width: 20px; height: 21px; margin: 4px 0 0 19px; background: #eee; clip-path: polygon(100% 0, 100% 100%, 0 100%); }
td.cur { position: relative; }
td.cur::before { content: ""; position: absolute; inset: -2px; border: 2px solid #217346; }
td.cur::after { content: ""; position: absolute; right: -3px; bottom: -3px; width: 5px; height: 5px; background: #217346; outline: 1px solid #fff; }
.mark { position: absolute; border: 5px solid #ff2414; border-radius: 4px; }
.m1 { left: 445px; top: 81px; width: 100px; height: 34px; }
.m2 { left: 639px; top: 45px; width: 135px; height: 95px; }
.m3 { left: 648px; top: 165px; width: 118px; height: 35px; }
.vscroll { position: relative; flex: none; width: 26px; margin: 0 2px -3px 3px; padding: 8px 0; display: flex; flex-direction: column; align-items: center; gap: 8px; background: #3b3b3b; border-radius: 13px; }
.vthumb { flex: 1; width: 12px; margin-bottom: 16px; border-radius: 6px; background: #c8c8c8; }
.gauge { position: absolute; }
.g1 { left: 11px; top: 424px; }
.g2 { left: 13px; top: 665px; }

/* sheet tabs */
.sheetbar { flex: none; height: 49px; display: flex; align-items: center; padding: 0 28px 0 15px; background: linear-gradient(90deg, #4b4d4c 0%, #4b4f4f 25%, #4b5458 48%, #504e59 68%, #4f4c50 100%); border-bottom: 1px solid #3c3e3f; }
.nav { width: 49px; height: 30px; }
.sheettab { align-self: flex-start; width: 96px; height: 42px; margin-left: 53px; background: #fff; color: #222; border-radius: 0 0 7px 7px; font: 22px/30px "Open Sans", sans-serif; }
.sheettab span { height: 33px; margin-top: 1px; padding: 0 1px; border-bottom: 3px solid #107c41; }
.tabsep { width: 1px; height: 28px; margin-left: 6px; background: #888; }
.add { margin-left: 62px; }
.push { margin: 0 22px 0 auto; }
.hscroll { display: flex; align-items: center; width: 790px; height: 26px; padding: 0 7px; background: #3b3b3b; border-radius: 13px; }
.hthumb { flex: 1; height: 12px; margin: 0 19px 0 8px; border-radius: 6px; background: #c8c8c8; }

/* status bar */
.statusbar { flex: none; height: 32px; display: flex; align-items: center; padding: 0 11px 0 17px; background: #515151; }
.rec { margin-left: 27px; }
.acc { margin: 0 2px 0 25px; }
.views { display: flex; margin: 0 8px 0 auto; }
.views button { width: 60px; height: 32px; }
.views .on { background: #5d5d5d; }
.zoom { appearance: none; width: 148px; height: 18px; margin: 0 8px; background: linear-gradient(#c8c8c8, #c8c8c8) center / 100% 2px no-repeat; }
.zoom::-webkit-slider-thumb { appearance: none; width: 8px; height: 17px; background: #c8c8c8; }
.pct { font-family: "Noto Sans", sans-serif; width: 48px; margin-left: 19px; }

/* task bar */
.taskbar { flex: none; height: 72px; display: grid; grid-template-columns: 1fr auto 1fr; align-items: center; border-top: 2px solid #3c3f46; background: linear-gradient(90deg, #1b2424 0%, #1a2426 28%, #152044 37%, #1c1a5c 45%, #27145f 55%, #2c1250 66%, #2b1645 80%, #241d33 100%); }
.weather { justify-self: start; padding-left: 28px; gap: 10px; }
.wt, .clock { display: flex; flex-direction: column; line-height: 24px; }
.wt { align-items: flex-start; }
.muted { color: #b9bdbd; }
.apps { display: flex; align-items: center; }
.app { position: relative; width: 60px; height: 60px; margin-left: 6px; border-radius: 6px; }
.app:first-child { margin-left: 0; }
.tsearch { display: flex; align-items: center; width: 329px; height: 47px; margin: 0 1px 0 9px; padding: 0 3px 0 17px; border: 1px solid #ffffff33; border-radius: 24px; background: #ffffff26; }
.tsearch input { flex: 1; min-width: 0; font-size: 21px; padding-left: 15px; }
.tsearch input::placeholder { color: #ccc; opacity: 1; }
.brief { display: flex; align-items: center; justify-content: center; width: 78px; height: 39px; border-radius: 20px; background: #ffffff1f; }
.dot::after, .current::after { content: ""; position: absolute; bottom: 1px; left: 26px; width: 9px; height: 5px; border-radius: 3px; background: #9c8fae; }
.current { background: #ffffff12; border: 1px solid #ffffff14; }
.current::after { left: 16px; width: 26px; background: #dc9be6; }
.chrome { margin: -8px -8px 0 0; }
.tray { display: flex; align-items: center; justify-content: flex-end; padding-right: 32px; }
.ime { font-size: 22px; margin: 0 26px 0 28px; }
.pc { margin-right: 12px; }
.snd { margin-right: 25px; }
.clock { align-items: flex-end; }
.bell { margin-left: 13px; }
```
FILE: grid.js
```js
const columns = 'ABCDEFGHIJKLMNOPQRS'.split('');
const rows = [
  ['日期', '销售员', '客户', '产品编号', '产品名称', '类别', '单价', '销售数量', '总销售额', '备注'],
  ['2024/3/1', '张三', '客户A', 1, '笔记本电脑', '电子产品', 5000, 10, 50000],
  ['2024/3/1', '李四', '客户B', 2, '手机', '电子产品', 3000, 20, 60000, '紧急订单'],
  ['2024/3/2', '王五', '客户C', 3, '平板电脑', '电子产品', 4000, 5, 20000],
  ['2024/3/2', '赵六', '客户A', 4, '办公椅', '家具', 800, 15, 12000],
  ['2024/3/3', '钱七', '客户D', 5, '电视机', '电子产品', 6000, 8, 48000],
  [, , , , 1, 4]
];
const current = { col: 'H', row: 9 };

let html = '<colgroup><col class="c-row">' + columns.map(c => `<col class="c-${c.toLowerCase()}">`).join('') + '</colgroup>';
html += '<thead><tr><th class="corner"></th>' +
  columns.map(c => `<th${c === current.col ? ' class="sel"' : ''}>${c}</th>`).join('') + '</tr></thead><tbody>';
for (let r = 1; r <= 31; r++) {
  html += `<tr><th${r === current.row ? ' class="sel"' : ''}>${r}</th>`;
  columns.forEach((c, i) => {
    const value = (rows[r - 1] || [])[i];
    const numeric = typeof value === 'number' || /^\d{4}\//.test(value || '');
    const cls = r === current.row && c === current.col ? 'cur' : numeric ? 'num' : '';
    html += `<td${cls ? ` class="${cls}"` : ''}>${value === undefined ? '' : value}</td>`;
  });
  html += '</tr>';
}
document.getElementById('grid').innerHTML = html + '</tbody>';
```
